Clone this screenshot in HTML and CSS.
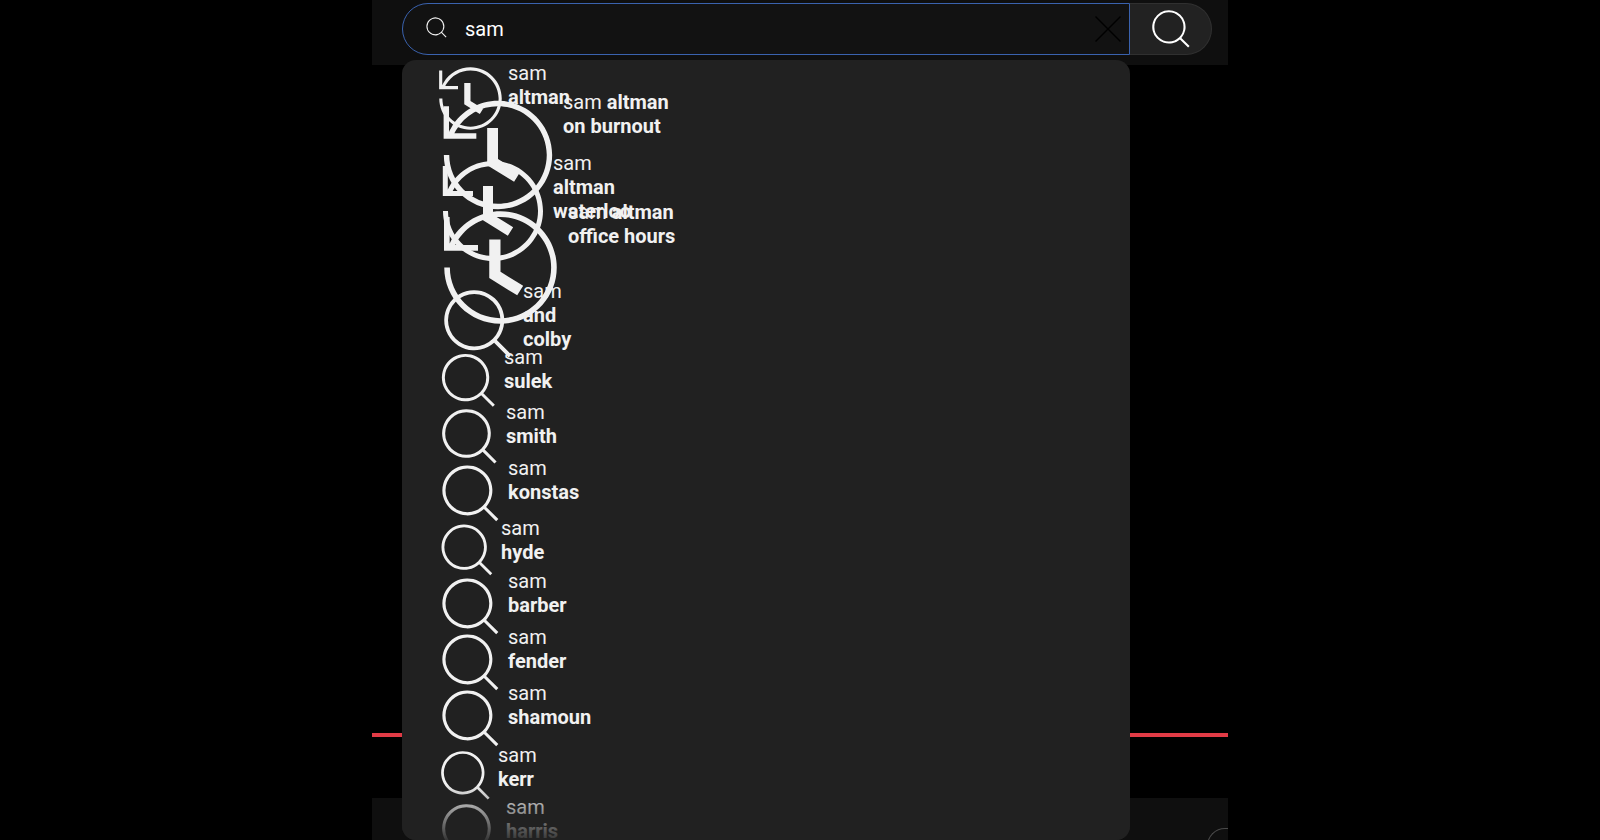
FILE: index.html
```html
<!DOCTYPE html>
<html lang="en">
<head>
    <meta charset="UTF-8">
    <meta name="viewport" content="width=device-width, initial-scale=1.0">
    <title>Search</title>
    <link rel="stylesheet" href="styles.css">
</head>
<body>
    <!-- shared icons -->
    <svg class="sprite" aria-hidden="true">
        <symbol id="icon-search" viewBox="0 0 24 24">
            <path d="M16.296 16.996a8 8 0 1 1 .707-.708l3.909 3.91-.707.707-3.909-3.909zM18 11a7 7 0 0 0-14 0 7 7 0 1 0 14 0z"/>
        </symbol>
        <symbol id="icon-history" viewBox="0 0 24 24">
            <path d="M14.97 16.95 10 13.87V7h2v5.76l4.03 2.49-1.06 1.7zM22 12c0 5.51-4.49 10-10 10S2 17.51 2 12h1c0 4.96 4.04 9 9 9s9-4.04 9-9-4.04-9-9-9C8.81 3 5.92 4.64 4.28 7.38c-.11.18-.22.37-.31.56L3.94 8H8v1H1.96V3h1v4.74c.04-.09.07-.17.11-.25.11-.22.23-.42.35-.63C5.22 3.86 8.51 2 12 2c5.51 0 10 4.49 10 10z"/>
        </symbol>
        <symbol id="icon-clear" viewBox="0 0 26 26">
            <path d="M0 1 1 0l12 12L25 0l1 1-12 12 12 12-1 1-12-12L1 26l-1-1 12-12z"/>
        </symbol>
    </svg>

    <div class="page">
        <header class="header">
            <form class="search" role="search">
                <div class="search-box">
                    <svg class="search-box-icon"><use href="#icon-search"/></svg>
                    <input type="text" class="search-input" value="sam" aria-label="Search">
                    <button type="button" class="clear-button" aria-label="Clear">
                        <svg><use href="#icon-clear"/></svg>
                    </button>
                    <div class="suggestions">
                        <ul class="suggestion-list">
                            <li><a href="#"><svg class="size-75"><use href="#icon-history"/></svg><span>sam<br><b>altman</b></span></a></li>
                            <li><a href="#"><svg class="size-130"><use href="#icon-history"/></svg><span>sam <b>altman<br>on burnout</b></span></a></li>
                            <li><a href="#"><svg class="size-120"><use href="#icon-history"/></svg><span>sam<br><b>altman<br>waterloo</b></span></a></li>
                            <li><a href="#"><svg class="size-135"><use href="#icon-history"/></svg><span>sam <b>altman<br>office hours</b></span></a></li>
                            <li><a href="#"><svg class="size-90"><use href="#icon-search"/></svg><span>sam<br><b>and<br>colby</b></span></a></li>
                            <li><a href="#"><svg class="size-71"><use href="#icon-search"/></svg><span>sam<br><b>sulek</b></span></a></li>
                            <li><a href="#"><svg class="size-73"><use href="#icon-search"/></svg><span>sam<br><b>smith</b></span></a></li>
                            <li><a href="#"><svg class="size-75"><use href="#icon-search"/></svg><span>sam<br><b>konstas</b></span></a></li>
                            <li><a href="#"><svg class="size-68"><use href="#icon-search"/></svg><span>sam<br><b>hyde</b></span></a></li>
                            <li><a href="#"><svg class="size-75"><use href="#icon-search"/></svg><span>sam<br><b>barber</b></span></a></li>
                            <li><a href="#"><svg class="size-75"><use href="#icon-search"/></svg><span>sam<br><b>fender</b></span></a></li>
                            <li><a href="#"><svg class="size-75"><use href="#icon-search"/></svg><span>sam<br><b>shamoun</b></span></a></li>
                            <li><a href="#"><svg class="size-65"><use href="#icon-search"/></svg><span>sam<br><b>kerr</b></span></a></li>
                            <li><a href="#"><svg class="size-73"><use href="#icon-search"/></svg><span>sam<br><b>harris</b></span></a></li>
                        </ul>
                    </div>
                </div>
                <button type="submit" class="search-button" aria-label="Search">
                    <svg><use href="#icon-search"/></svg>
                </button>
            </form>
        </header>
        <main class="player">
            <div class="progress"></div>
        </main>
        <footer class="details">
            <div class="chip"></div>
        </footer>
    </div>
</body>
</html>
```

FILE: styles.css
```css
* {
    box-sizing: border-box;
}

body {
    margin: 0;
    background-color: #000;
    color: #f1f1f1;
    font-family: Roboto, Arial, sans-serif;
    font-size: 20px;
    line-height: 24px;
}

svg {
    display: block;
    flex-shrink: 0;
    fill: #f1f1f1;
}

.sprite {
    display: none;
}

.page {
    display: flex;
    flex-direction: column;
    max-width: 856px;
    height: 100vh;
    margin: 0 auto;
    overflow: hidden;
}

/* search bar */
.header {
    padding: 3px 16px 10px 30px;
    background-color: #0f0f0f;
}

.search {
    display: flex;
    height: 52px;
}

.search-box {
    position: relative;
    display: flex;
    flex: 1;
    align-items: center;
    padding: 0 8px 0 20px;
    background-color: #121212;
    border: 1px solid #3a62ae;
    border-radius: 26px 0 0 26px;
}

.search-box-icon {
    width: 27px;
    height: 27px;
    margin-bottom: 4px;
}

.search-input {
    flex: 1;
    min-width: 0;
    padding: 0 0 0 15px;
    background: none;
    border: none;
    outline: none;
    color: #fff;
    font: inherit;
}

.clear-button {
    padding: 0;
    background: none;
    border: none;
    cursor: pointer;
}

.clear-button svg {
    width: 26px;
    height: 26px;
    fill: #000;
}

.search-button {
    display: flex;
    align-items: center;
    justify-content: center;
    width: 82px;
    padding: 0;
    background-color: #222;
    border: 1px solid #303030;
    border-left: none;
    border-radius: 0 26px 26px 0;
    cursor: pointer;
}

.search-button svg {
    width: 50px;
    height: 50px;
    fill: #fff;
}

/* suggestions menu */
.suggestions {
    position: absolute;
    z-index: 1;
    top: 56px;
    left: -1px;
    right: -1px;
    height: calc(100vh - 60px);
    padding: 10px 0 0 31px;
    background-color: #212121;
    border-radius: 14px;
    overflow: hidden;
}

.suggestions::after {
    content: "";
    position: absolute;
    left: 0;
    right: 0;
    bottom: 0;
    height: 56px;
    background: linear-gradient(rgba(33, 33, 33, 0), rgba(33, 33, 33, 0.9));
}

/* rows stay even, tall icons run over their neighbours */
.suggestion-list {
    display: grid;
    grid-template-rows: repeat(14, minmax(0, 1fr));
    height: 790px;
    margin: 0;
    padding: 0;
    list-style: none;
}

.suggestion-list li {
    display: flex;
    align-items: center;
}

.suggestion-list a {
    display: flex;
    align-items: flex-start;
    color: inherit;
    text-decoration: none;
}

.size-65 {
    width: 65px;
    height: 65px;
}

.size-68 {
    width: 68px;
    height: 68px;
}

.size-71 {
    width: 71px;
    height: 71px;
}

.size-73 {
    width: 73px;
    height: 73px;
}

.size-75 {
    width: 75px;
    height: 75px;
}

.size-90 {
    width: 90px;
    height: 90px;
}

.size-120 {
    width: 120px;
    height: 120px;
}

.size-130 {
    width: 130px;
    height: 130px;
}

.size-135 {
    width: 135px;
    height: 135px;
}

/* player */
.player {
    display: flex;
    flex: 1;
    flex-direction: column;
    justify-content: flex-end;
    padding-bottom: 61px;
}

.progress {
    height: 4px;
    background-color: #e13b46;
}

.details {
    display: flex;
    justify-content: flex-end;
    height: 42px;
    padding-top: 30px;
    background-color: #0f0f0f;
    overflow: hidden;
}

.chip {
    width: 21px;
    height: 36px;
    border: 1px solid #4a4a4a;
    border-right: none;
    border-radius: 18px 0 0 18px;
}
```
